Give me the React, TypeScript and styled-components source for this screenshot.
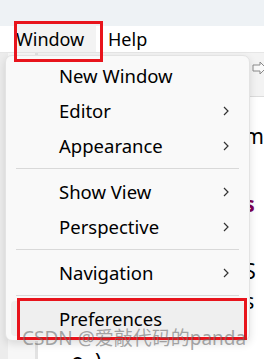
import React from "react";
import styled, { createGlobalStyle } from "styled-components";

const GlobalStyle = createGlobalStyle`
  html, body {
    margin: 0;
    padding: 0;
    background: #ffffff;
    overflow: hidden;
  }
  body {
    font-family: "Noto Sans", "Open Sans", sans-serif;
  }
`;

const Page = styled.div`
  position: relative;
  width: 264px;
  height: 359px;
  overflow: hidden;
  display: flex;
  flex-direction: column;
  background: #ffffff;
`;

const TitleStrip = styled.div`
  height: 26px;
  flex-shrink: 0;
  background: #eef2f5;
`;

const MenuBar = styled.div`
  height: 26px;
  flex-shrink: 0;
  display: flex;
  align-items: stretch;
  padding-left: 16px;
  background: #ffffff;
  border-bottom: 1px solid #e6e6e6;
`;

const BarItem = styled.div<{ $active?: boolean }>`
  display: flex;
  align-items: center;
  width: ${(p) => (p.$active ? "80px" : "auto")};
  padding-left: ${(p) => (p.$active ? "0" : "12px")};
  font-size: 18px;
  color: #000;
  background: ${(p) => (p.$active ? "#f3f3f3" : "transparent")};
  box-sizing: border-box;
`;

const Workspace = styled.div`
  flex: 1;
  min-height: 0;
  overflow: hidden;
  display: flex;
  background: #f5f5f5;
`;

const LeftPanel = styled.div`
  width: 10px;
  background: #ececec;
`;

const Ruler = styled.div`
  width: 32px;
  background: #f7f7f7;
  border-right: 3px solid #e2e2e2;
`;

const EditorArea = styled.div`
  flex: 1;
  display: flex;
  flex-direction: column;
`;

const Toolbar = styled.div`
  height: 44px;
  flex-shrink: 0;
  display: flex;
  justify-content: flex-end;
  align-items: flex-start;
  padding-top: 8px;
  box-sizing: border-box;
  background: #f3f3f3;
  border-bottom: 1px solid #dcdcdc;
`;

const Editor = styled.div`
  flex: 1;
  background: #ffffff;
  display: flex;
  flex-direction: column;
  padding-top: 24px;
  font-family: "Noto Sans", sans-serif;
  font-size: 21px;
`;

const CodeLine = styled.div<{ $keyword?: boolean; $gap?: number; $indent: number }>`
  height: 30px;
  line-height: 30px;
  margin-top: ${(p) => p.$gap ?? 0}px;
  padding-left: ${(p) => p.$indent}px;
  color: ${(p) => (p.$keyword ? "#7f0055" : "#000")};
  font-weight: ${(p) => (p.$keyword ? 700 : 400)};
  white-space: pre;
  flex-shrink: 0;
`;

const Menu = styled.div`
  position: absolute;
  left: 5px;
  top: 55px;
  width: 245px;
  padding: 2px 0 4px;
  background: #f9f9f9;
  border: 1px solid #e3e3e3;
  border-radius: 7px;
  box-shadow: 0 3px 8px rgba(0, 0, 0, 0.12);
  box-sizing: border-box;
  display: flex;
  flex-direction: column;
`;

const Item = styled.div<{ $hover?: boolean }>`
  height: 35px;
  display: flex;
  align-items: center;
  margin: 0 5px;
  padding: 0 14px 0 48px;
  border-radius: 4px;
  font-size: 18.5px;
  color: #000;
  background: ${(p) => (p.$hover ? "#efefef" : "transparent")};
`;

const Label = styled.span`
  flex: 1;
`;

const Separator = styled.div`
  height: 11px;
  display: flex;
  align-items: center;
  padding: 0 10px;
  &::after {
    content: "";
    flex: 1;
    height: 1px;
    background: #d9d9d9;
  }
`;

const Highlight = styled.div<{ $x: number; $y: number; $w: number; $h: number }>`
  position: absolute;
  left: ${(p) => p.$x}px;
  top: ${(p) => p.$y}px;
  width: ${(p) => p.$w}px;
  height: ${(p) => p.$h}px;
  border: 3px solid #e8141c;
  box-sizing: border-box;
`;

const Watermark = styled.div`
  position: absolute;
  left: 22px;
  top: 328px;
  font-family: "Noto Sans", "Noto Sans CJK SC", sans-serif;
  font-size: 19px;
  line-height: 20px;
  color: rgba(110, 110, 110, 0.6);
  white-space: nowrap;
`;

const Chevron = () => (
  <svg width="8" height="10" viewBox="0 0 8 10">
    <path d="M2 1 L6 5 L2 9" fill="none" stroke="#333" strokeWidth="1.2" />
  </svg>
);

const PinIcon = () => (
  <svg width="20" height="14" viewBox="0 0 20 14" style={{ marginRight: -6 }}>
    <path
      d="M3 4 H10 V1 L16 7 L10 13 V10 H3 Z"
      fill="#fafafa"
      stroke="#8a8a8a"
      strokeWidth="1"
    />
  </svg>
);

type Entry = { label: string; sub?: boolean; hover?: boolean } | "sep";

const entries: Entry[] = [
  { label: "New Window" },
  { label: "Editor", sub: true },
  { label: "Appearance", sub: true },
  "sep",
  { label: "Show View", sub: true },
  { label: "Perspective", sub: true },
  "sep",
  { label: "Navigation", sub: true },
  "sep",
  { label: "Preferences", hover: true },
];

const App = () => {
  return (
    <Page>
      <GlobalStyle />
      <TitleStrip />
      <MenuBar>
        <BarItem $active>Window</BarItem>
        <BarItem>Help</BarItem>
      </MenuBar>
      <Workspace>
        <LeftPanel />
        <Ruler />
        <EditorArea>
          <Toolbar>
            <PinIcon />
          </Toolbar>
          <Editor>
            <CodeLine $indent={206}>m</CodeLine>
            <CodeLine $indent={206} $keyword $gap={38}>s</CodeLine>
            <CodeLine $indent={206} $gap={37}>S</CodeLine>
            <CodeLine $indent={206} $gap={0}>s</CodeLine>
            <CodeLine $indent={33} $gap={30}>{"o  )"}</CodeLine>
          </Editor>
        </EditorArea>
      </Workspace>
      <Menu>
        {entries.map((e, i) =>
          e === "sep" ? (
            <Separator key={i} />
          ) : (
            <Item key={i} $hover={e.hover}>
              <Label>{e.label}</Label>
              {e.sub && <Chevron />}
            </Item>
          )
        )}
      </Menu>
      <Highlight $x={14} $y={21} $w={89} $h={41} />
      <Highlight $x={17} $y={298} $w={230} $h={42} />
      <Watermark>CSDN @爱敲代码的panda</Watermark>
    </Page>
  );
};

export default App;
